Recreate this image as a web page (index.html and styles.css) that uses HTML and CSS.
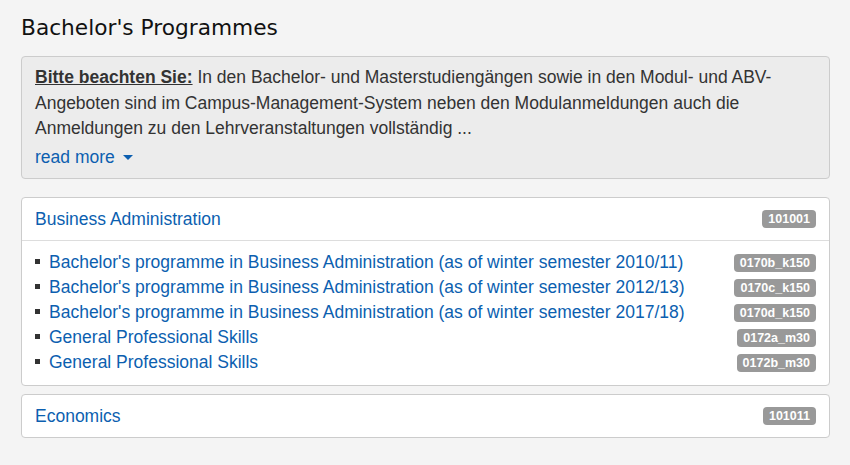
FILE: index.html
```html
<!DOCTYPE html>
<html lang="en">
<head>
    <meta charset="UTF-8">
    <meta name="viewport" content="width=device-width, initial-scale=1.0">
    <title>Bachelor's Programmes</title>
    <link rel="stylesheet" href="styles.css">
</head>
<body>
    <div class="container">
        <h1 class="page-title">Bachelor's Programmes</h1>

        <div class="notice">
            <p><strong>Bitte beachten Sie:</strong> In den Bachelor- und Masterstudiengängen sowie in den Modul- und ABV-Angeboten sind im Campus-Management-System neben den Modulanmeldungen auch die Anmeldungen zu den Lehrveranstaltungen vollständig ...</p>
            <a href="#" class="read-more">read more <span class="caret"></span></a>
        </div>

        <div class="panel">
            <div class="panel-heading">
                <a href="#">Business Administration</a>
                <span class="badge">101001</span>
            </div>
            <ul class="programme-list">
                <li><a href="#">Bachelor's programme in Business Administration (as of winter semester 2010/11)</a><span class="badge">0170b_k150</span></li>
                <li><a href="#">Bachelor's programme in Business Administration (as of winter semester 2012/13)</a><span class="badge">0170c_k150</span></li>
                <li><a href="#">Bachelor's programme in Business Administration (as of winter semester 2017/18)</a><span class="badge">0170d_k150</span></li>
                <li><a href="#">General Professional Skills</a><span class="badge">0172a_m30</span></li>
                <li><a href="#">General Professional Skills</a><span class="badge">0172b_m30</span></li>
            </ul>
        </div>

        <div class="panel">
            <div class="panel-heading">
                <a href="#">Economics</a>
                <span class="badge">101011</span>
            </div>
        </div>
    </div>
</body>
</html>
```

FILE: styles.css
```css
body {
    font-family: "Liberation Sans", Arial, sans-serif;
    font-size: 17.5px;
    color: #333;
    background-color: #f4f4f4;
    margin: 0;
    padding: 0;
}
a {
    color: #0c5fb0;
    text-decoration: none;
}
.container {
    padding: 14px 20px 20px 21px;
}
.page-title {
    font-family: "DejaVu Sans", Verdana, sans-serif;
    font-weight: normal;
    font-size: 21.7px;
    color: #111;
    margin: 0 0 14px;
    line-height: 28px;
}
.notice {
    background: #ececec;
    border: 1px solid #ccc;
    border-radius: 4px;
    padding: 8px 13px 8px;
    line-height: 25.5px;
}
.notice p {
    margin: 0;
}
.notice strong {
    text-decoration: underline;
}
.read-more {
    display: inline-block;
    margin-top: 3px;
}
.caret {
    display: inline-block;
    width: 0;
    height: 0;
    margin-left: 3px;
    vertical-align: middle;
    border-top: 5px solid #0c5fb0;
    border-left: 5px solid transparent;
    border-right: 5px solid transparent;
}
.panel {
    background: white;
    border: 1px solid #ccc;
    border-radius: 4px;
    margin-top: 18px;
}
.panel + .panel {
    margin-top: 8px;
}
.panel-heading {
    display: flex;
    justify-content: space-between;
    align-items: center;
    padding: 10px 13px;
    line-height: 22px;
}
.panel-heading + .programme-list {
    border-top: 1px solid #ddd;
}
.programme-list {
    list-style: none;
    margin: 0;
    padding: 9px 13px 9.5px;
    line-height: 25px;
}
.programme-list li {
    display: flex;
    justify-content: space-between;
    align-items: center;
}
.programme-list li a::before {
    content: "";
    display: inline-block;
    width: 5px;
    height: 5px;
    background: #333;
    margin-right: 9px;
    vertical-align: middle;
    position: relative;
    top: -2px;
}
.badge {
    background: #999;
    color: white;
    font-weight: bold;
    font-size: 12.5px;
    line-height: 18px;
    padding: 0 6px;
    border-radius: 4px;
}
```
